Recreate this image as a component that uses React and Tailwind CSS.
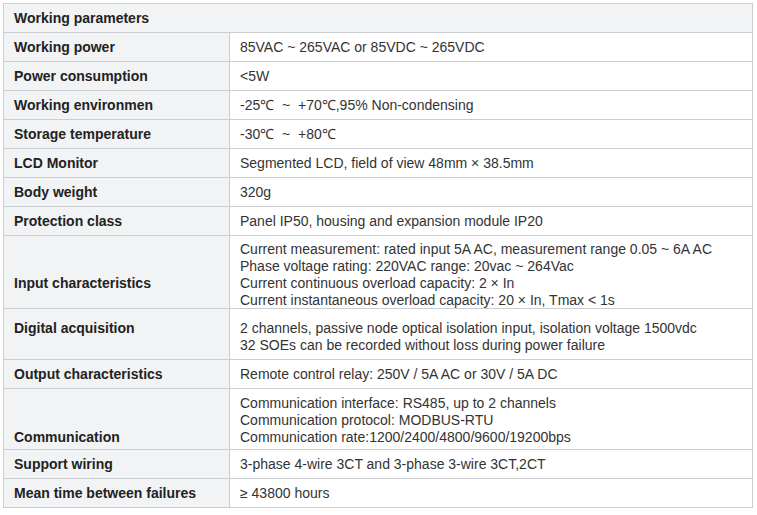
import React from "react";

const rows = [
  { label: "Working power", lines: ["85VAC ~ 265VAC or 85VDC ~ 265VDC"] },
  { label: "Power consumption", lines: ["<5W"] },
  { label: "Working environmen", lines: ["-25℃  ~  +70℃,95% Non-condensing"] },
  { label: "Storage temperature", lines: ["-30℃  ~  +80℃"] },
  { label: "LCD Monitor", lines: ["Segmented LCD, field of view 48mm × 38.5mm"] },
  { label: "Body weight", lines: ["320g"] },
  { label: "Protection class", lines: ["Panel IP50, housing and expansion module IP20"] },
  {
    label: "Input characteristics",
    h: "h-[73px]",
    labelPad: "pt-[39px]",
    valuePad: "pt-[5px]",
    lines: [
      "Current measurement: rated input 5A AC, measurement range 0.05 ~ 6A AC",
      "Phase voltage rating: 220VAC range: 20vac ~ 264Vac",
      "Current continuous overload capacity: 2 × In",
      "Current instantaneous overload capacity: 20 × In, Tmax < 1s",
    ],
  },
  {
    label: "Digital acquisition",
    h: "h-[51px]",
    labelPad: "pt-[11px]",
    valuePad: "pt-[11px]",
    lines: [
      "2 channels, passive node optical isolation input, isolation voltage 1500vdc",
      "32 SOEs can be recorded without loss during power failure",
    ],
  },
  { label: "Output characteristics", lines: ["Remote control relay: 250V / 5A AC or 30V / 5A DC"] },
  {
    label: "Communication",
    h: "h-[61px]",
    labelPad: "pt-[40px]",
    valuePad: "pt-[6px]",
    lines: [
      "Communication interface: RS485, up to 2 channels",
      "Communication protocol: MODBUS-RTU",
      "Communication rate:1200/2400/4800/9600/19200bps",
    ],
  },
  { label: "Support wiring", lines: ["3-phase 4-wire 3CT and 3-phase 3-wire 3CT,2CT"] },
  { label: "Mean time between failures", lines: ["≥ 43800 hours"] },
];

function Row({ row }) {
  const multi = row.lines.length > 1;
  return (
    <div className={`flex border-t border-[#cbcdd1] ${row.h || "h-[29px]"}`}>
      <div
        className={`w-[226px] shrink-0 border-r border-[#cbcdd1] bg-[#f2f3f5] pl-[10px] font-bold text-[#222] flex ${
          multi ? row.labelPad : "items-center"
        }`}
      >
        <span>{row.label}</span>
      </div>
      <div className={`flex-1 pl-[10px] text-[#333] flex flex-col ${multi ? row.valuePad : "justify-center"}`}>
        {row.lines.map((l, i) => (
          <div key={i} className="whitespace-pre">
            {l}
          </div>
        ))}
      </div>
    </div>
  );
}

export default function App() {
  return (
    <div className="min-h-screen bg-white p-[3px]" style={{ fontFamily: '"Liberation Sans", Arial, sans-serif' }}>
      <div className="w-[750px] border border-[#cbcdd1] text-[14px] leading-[17px]">
        <div className="h-[28px] bg-[#f2f3f5] pl-[10px] flex items-center font-bold text-[#222]">
          Working parameters
        </div>
        {rows.map((r) => (
          <Row key={r.label} row={r} />
        ))}
      </div>
    </div>
  );
}
